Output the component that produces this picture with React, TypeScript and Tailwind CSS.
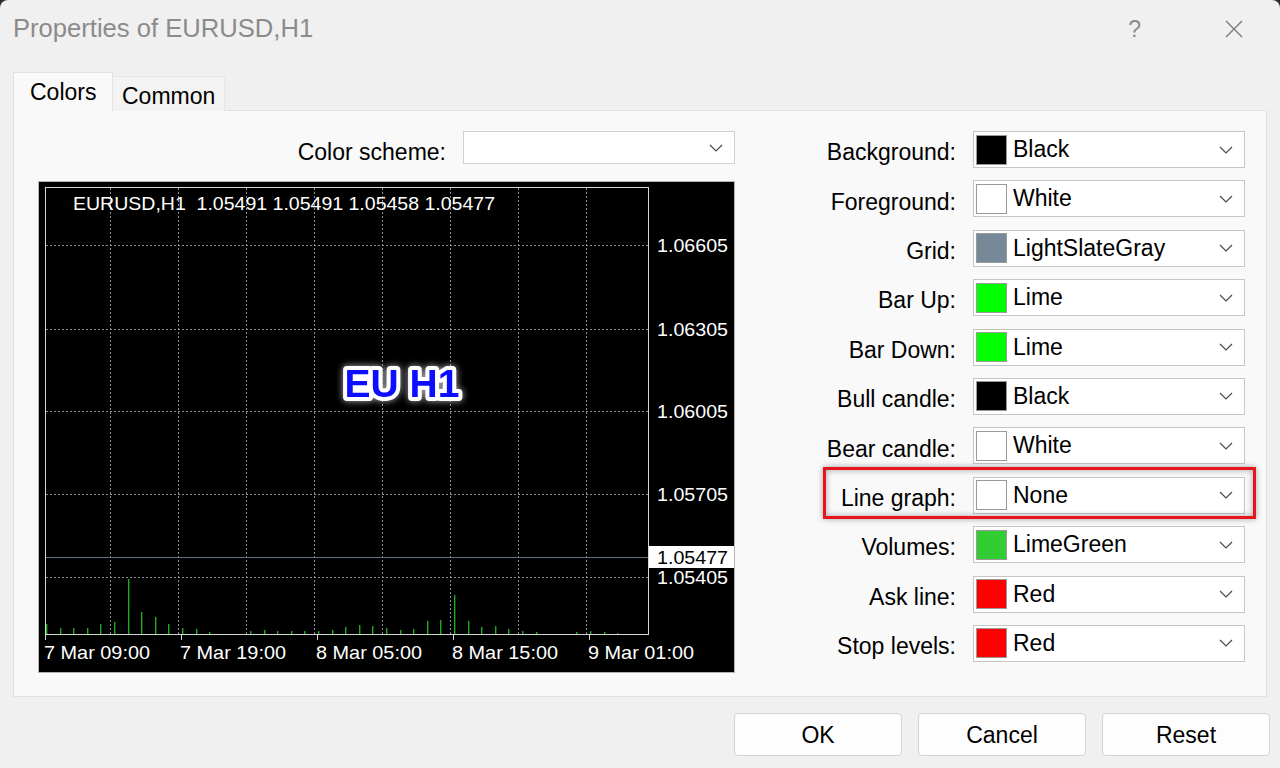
import React from "react";

const colorRows = [
  { label: "Background:", name: "Black", swatch: "bg-[#000000]" },
  { label: "Foreground:", name: "White", swatch: "bg-[#ffffff]" },
  { label: "Grid:", name: "LightSlateGray", swatch: "bg-[#778899]" },
  { label: "Bar Up:", name: "Lime", swatch: "bg-[#00ff00]" },
  { label: "Bar Down:", name: "Lime", swatch: "bg-[#00ff00]" },
  { label: "Bull candle:", name: "Black", swatch: "bg-[#000000]" },
  { label: "Bear candle:", name: "White", swatch: "bg-[#ffffff]" },
  { label: "Line graph:", name: "None", swatch: "bg-[#ffffff]", marked: true },
  { label: "Volumes:", name: "LimeGreen", swatch: "bg-[#32cd32]" },
  { label: "Ask line:", name: "Red", swatch: "bg-[#ff0000]" },
  { label: "Stop levels:", name: "Red", swatch: "bg-[#ff0000]" },
];

// volume heights, one per hour bar
const volumes = [
  10, 6, 6, 6, 10, 12, 55, 22, 17, 10, 6, 5, 2, 0, 0, 3, 4, 3, 3, 3, 3, 4, 7, 9, 8, 6, 4, 5, 13, 14, 39, 13, 7,
  8, 5, 3, 2, 0, 0, 2, 3, 2, 1,
];

const priceLevels = [
  { y: 245, label: "1.06605" },
  { y: 329, label: "1.06305" },
  { y: 411, label: "1.06005" },
  { y: 494, label: "1.05705" },
  { y: 577, label: "1.05405" },
];

const timeLabels = ["7 Mar 09:00", "7 Mar 19:00", "8 Mar 05:00", "8 Mar 15:00", "9 Mar 01:00"];

const Chevron = () => (
  <svg width="14" height="8" viewBox="0 0 14 8" className="shrink-0">
    <path d="M1 1 L7 7 L13 1" fill="none" stroke="#4a4a4a" strokeWidth="1.2" />
  </svg>
);

const Chart = () => {
  const gridX = [110, 178, 246, 314, 382, 450, 518, 586];
  return (
    <div className="w-[697px] h-[492px] border border-[#b4b4b4] bg-black overflow-hidden">
      <svg width="695" height="490" className="block">
        <g transform="translate(-39,-182)" fontFamily="'Liberation Sans', Arial, sans-serif">
          {/* grid */}
          {gridX.map((x) => (
            <line key={x} x1={x + 0.5} y1={188} x2={x + 0.5} y2={634} stroke="#8a929c" strokeDasharray="2 2" />
          ))}
          {priceLevels.map((p) => (
            <line key={p.y} x1={46} y1={p.y + 0.5} x2={649} y2={p.y + 0.5} stroke="#8a929c" strokeDasharray="2 2" />
          ))}

          {/* volumes */}
          {volumes.map((h, i) =>
            h > 0 ? <rect key={i} x={Math.round(46 + i * 13.6)} y={634 - h} width={1.4} height={h} fill="#1faa1f" /> : null
          )}

          {/* current price line */}
          <line x1={46} y1={557.5} x2={649} y2={557.5} stroke="#5f6f84" strokeWidth="1" />

          {/* frame */}
          <rect x={45.5} y={187.5} width={603} height={447} fill="none" stroke="#d6d6d6" strokeWidth="1" />

          {/* time ticks */}
          {timeLabels.map((_, i) => (
            <line key={i} x1={45.5 + i * 136} y1={635} x2={45.5 + i * 136} y2={640} stroke="#d6d6d6" />
          ))}

          {/* header */}
          <text x={73} y={210} fill="#ffffff" fontSize="19" textLength={422} lengthAdjust="spacingAndGlyphs" xmlSpace="preserve">
            EURUSD,H1  1.05491 1.05491 1.05458 1.05477
          </text>

          {/* price axis */}
          {priceLevels.map((p) => (
            <text key={p.label} x={657} y={p.y + 7} fill="#ffffff" fontSize="19" textLength={71} lengthAdjust="spacingAndGlyphs">
              {p.label}
            </text>
          ))}
          <rect x={649} y={546} width={85} height={22} fill="#ffffff" />
          <text x={657} y={564} fill="#000000" fontSize="19" textLength={71} lengthAdjust="spacingAndGlyphs">
            1.05477
          </text>

          {/* time axis */}
          {timeLabels.map((t, i) => (
            <text key={t} x={44 + i * 136} y={659} fill="#ffffff" fontSize="19" textLength={106} lengthAdjust="spacingAndGlyphs">
              {t}
            </text>
          ))}

          {/* watermark label */}
          <defs>
            <filter id="glow" x="-20%" y="-40%" width="140%" height="180%">
              <feGaussianBlur in="SourceAlpha" stdDeviation="3.5" result="b" />
              <feFlood floodColor="#b0b0b0" result="c" />
              <feComposite in="c" in2="b" operator="in" result="s" />
              <feMerge>
                <feMergeNode in="s" />
                <feMergeNode in="SourceGraphic" />
              </feMerge>
            </filter>
          </defs>
          <text
            x={402}
            y={397}
            textAnchor="middle"
            fontSize="39"
            fontWeight="bold"
            fill="#0a0aff"
            stroke="#ffffff"
            strokeWidth="8"
            strokeLinejoin="round"
            paintOrder="stroke fill"
            filter="url(#glow)"
          >
            EU H1
          </text>
        </g>
      </svg>
    </div>
  );
};

export default function App() {
  return (
    <div className="w-[1280px] h-[768px] bg-[#2a2a2a] font-['Liberation_Sans',Arial,sans-serif] text-black">
      <div className="w-full h-full bg-[#f0f0f0] rounded-t-[8px] flex flex-col">
        {/* title bar */}
        <div className="h-[58px] flex items-center pl-[13px] shrink-0">
          <span className="text-[25.6px] text-[#8b8b8b] leading-none -mt-[1px]">Properties of EURUSD,H1</span>
          <div className="ml-auto flex items-center pr-[37px]">
            <span className="text-[23px] text-[#8b8b8b] leading-none">?</span>
            <svg width="18" height="18" viewBox="0 0 18 18" className="ml-[84px]">
              <path d="M1 1 L17 17 M17 1 L1 17" stroke="#7a7a7a" strokeWidth="1.4" fill="none" />
            </svg>
          </div>
        </div>

        {/* tabs */}
        <div className="mt-[14px] px-[13px] shrink-0">
          <div className="flex items-end h-[39px] relative z-10 -mb-px">
            <div className="w-[100px] h-[39px] bg-[#f9f9f9] border border-b-0 border-[#e2e2e2] flex items-center pl-[16px] text-[23px]">
              Colors
            </div>
            <div className="w-[112px] h-[35px] bg-[#f3f3f3] border border-l-0 border-b-0 border-[#e6e6e6] flex items-center pl-[9px] pt-[4px] text-[23px]">
              Common
            </div>
          </div>

          {/* panel */}
          <div className="h-[587px] bg-[#f9f9f9] border border-[#e2e2e2] flex">
            <div className="ml-[24px] mt-[20px] w-[697px] flex flex-col">
              <div className="h-[33px] flex items-center justify-end gap-[17px]">
                <span className="text-[23px] mt-[9px]">Color scheme:</span>
                <div className="w-[272px] h-[33px] bg-white border border-[#d0d0d0] flex items-center justify-end pr-[11px]">
                  <Chevron />
                </div>
              </div>
              <div className="mt-[17px]">
                <Chart />
              </div>
            </div>

            <div className="ml-auto mr-[21px] mt-[20px] w-[445px] flex flex-col gap-[12.4px]">
              {colorRows.map((r) => (
                <div key={r.label} className="relative h-[37px] flex items-center justify-end gap-[17px]">
                  {r.marked && (
                    <span className="absolute left-[23px] -right-[11px] -top-[10px] -bottom-[5px] border-[3px] border-[#e8141c] shadow-[0_0_6px_rgba(0,0,0,0.35),inset_0_0_6px_rgba(0,0,0,0.35)]" />
                  )}
                  <span className="text-[23px] mt-[6px]">{r.label}</span>
                  <div className="w-[272px] h-[37px] bg-white border border-[#c6c6c6] flex items-center pl-[2px] pr-[11px]">
                    <span className={`w-[31px] h-[30px] border border-[#9a9a9a] ${r.swatch}`} />
                    <span className="ml-[6px] text-[23px] leading-none">{r.name}</span>
                    <span className="ml-auto">
                      <Chevron />
                    </span>
                  </div>
                </div>
              ))}
            </div>
          </div>
        </div>

        {/* buttons */}
        <div className="mt-[16px] flex justify-end gap-[16px] pr-[10px]">
          {["OK", "Cancel", "Reset"].map((b) => (
            <button
              key={b}
              className="w-[168px] h-[43px] bg-[#fdfdfd] border border-[#d3d3d3] rounded-[4px] text-[23px] text-black pt-[2px]"
            >
              {b}
            </button>
          ))}
        </div>
      </div>
    </div>
  );
}
